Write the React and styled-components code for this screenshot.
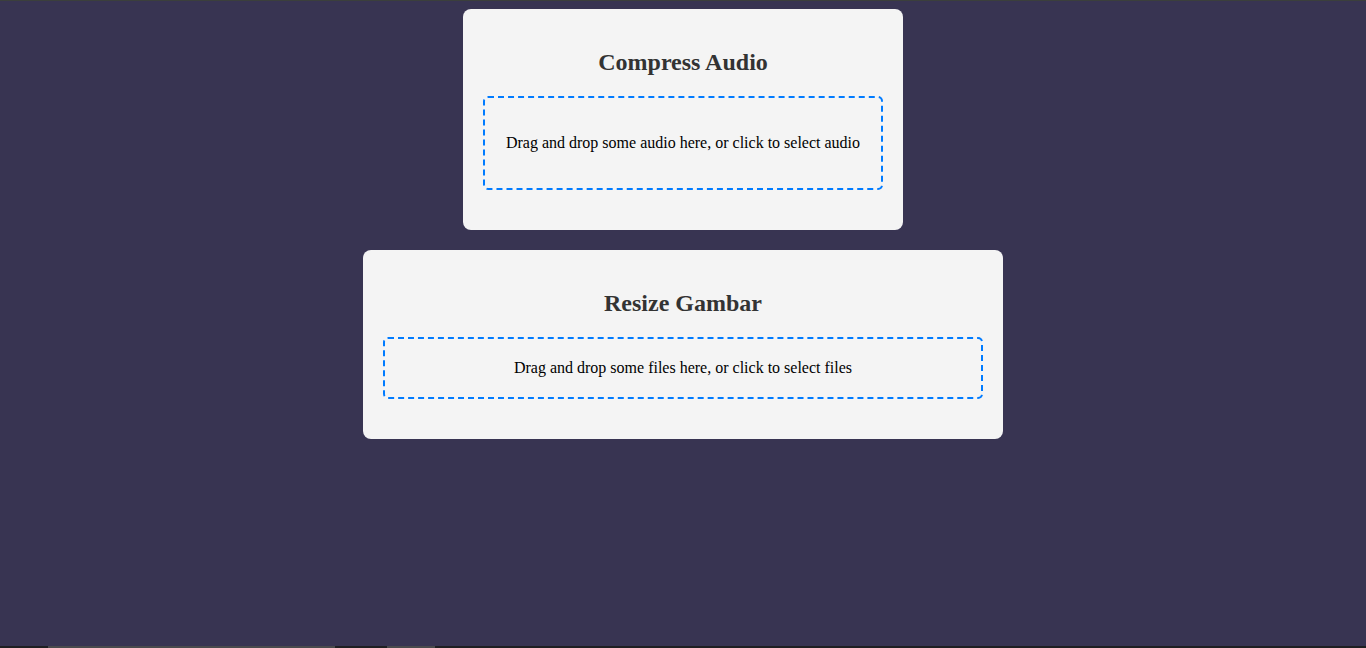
import React from "react";
import styled, { createGlobalStyle } from "styled-components";

const Global = createGlobalStyle`
  html, body { margin: 0; padding: 0; height: 100%; }
  body {
    background: #383452;
    font-family: "Liberation Serif", "Times New Roman", serif;
  }
  #root { min-height: 100%; }
`;

const Page = styled.div`
  min-height: 100vh;
  display: flex;
  flex-direction: column;
  border-top: 1px solid #3b3f3c;
  box-sizing: border-box;
`;

const Main = styled.main`
  flex: 1;
  display: flex;
  flex-direction: column;
  align-items: center;
  gap: 20px;
  padding-top: 8px;
`;

const Card = styled.section`
  width: ${(p) => p.$width}px;
  box-sizing: border-box;
  background: #f4f4f4;
  border-radius: 8px;
  padding: 20px 20px 40px;
  text-align: center;
`;

const Title = styled.h2`
  margin: 20px 0;
  font-size: 24px;
  line-height: 27px;
  font-weight: bold;
  color: #333;
`;

const Dropzone = styled.div`
  border: 2px dashed #007bff;
  border-radius: 5px;
  padding: 20px;
  color: #000;
  font-size: 16px;
  line-height: 18px;
  cursor: pointer;
`;

const DropText = styled.p`
  margin: 16px 0;
`;

const BottomBar = styled.div`
  height: 2px;
  background: #1f1f22;
  display: flex;
`;

const BarThumb = styled.div`
  margin-left: ${(p) => p.$left}px;
  width: ${(p) => p.$w}px;
  background: #4a4a4d;
`;

export default function App() {
  return (
    <>
      <Global />
      <Page>
        <Main>
          <Card $width={440}>
            <Title>Compress Audio</Title>
            <Dropzone>
              <DropText>Drag and drop some audio here, or click to select audio</DropText>
            </Dropzone>
          </Card>
          <Card $width={640}>
            <Title>Resize Gambar</Title>
            <Dropzone>Drag and drop some files here, or click to select files</Dropzone>
          </Card>
        </Main>
        <BottomBar>
          <BarThumb $left={48} $w={287} />
          <BarThumb $left={52} $w={48} />
        </BottomBar>
      </Page>
    </>
  );
}
